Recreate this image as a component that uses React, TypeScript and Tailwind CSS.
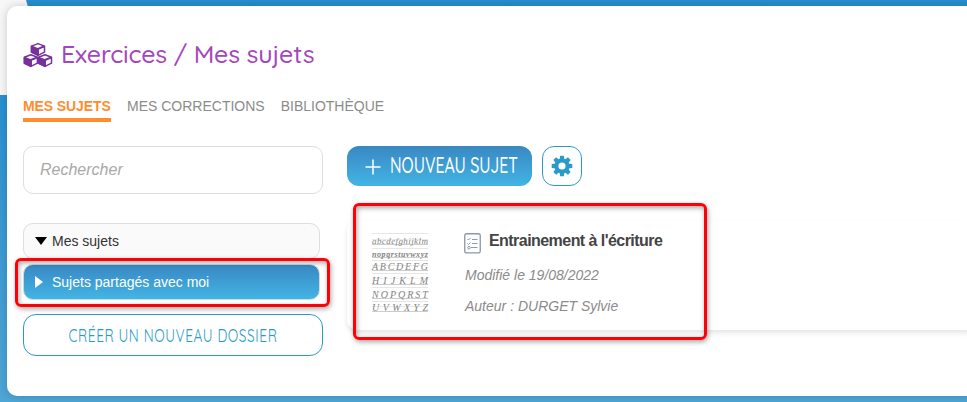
import type { ReactNode } from 'react';

const arial = "font-['Liberation_Sans',Arial,sans-serif]";

function Cubes() {
  return (
    <svg width="30" height="26" viewBox="0 0 30 26" className="shrink-0">
      {[[8, 0.9], [0.9, 12], [15, 12]].map(([x, y], i) => (
        <g key={i} transform={`translate(${x} ${y})`} stroke="#78309a" strokeWidth="1.5" strokeLinejoin="round">
          <path d="M.5 3.2 7 .7l6.5 2.5v6L7 12.4.5 9.2z" fill="#fff" />
          <path d="M.5 3.4 7 6v6.2L.5 9.2z" fill="#78309a" />
          <path d="M7 6l6.5-2.6M7 6v6.2" strokeWidth="2" />
        </g>
      ))}
    </svg>
  );
}

function Gear() {
  return (
    <svg width="22" height="22" viewBox="-11 -11 22 22" fill="#2a9bc9">
      {[0, 45, 90, 135, 180, 225, 270, 315].map((a) => (
        <path key={a} d="M-2.4-6-1.9-10.3H1.9L2.4-6z" transform={`rotate(${a})`} />
      ))}
      <circle r="5.6" fill="none" stroke="#2a9bc9" strokeWidth="4" />
    </svg>
  );
}

function Checklist() {
  return (
    <svg width="17" height="21" viewBox="0 0 17 21" fill="none" className="mt-px shrink-0">
      <rect x=".75" y=".75" width="15.5" height="19.2" rx="1.7" stroke="#8997aa" strokeWidth="1.3" />
      <path d="M3.5 6l1 1 2-2.2M3.5 10.5l1 1 2-2.2M8 6.5h5.5M8 10.5h5.5M7 14.5h6.5" stroke="#8190a5" strokeWidth=".9" />
      <circle cx="5" cy="14.7" r="1.3" stroke="#8190a5" strokeWidth=".9" />
    </svg>
  );
}

const lines: [string, string][] = [
  ['abcdefghijklm', 'h-[15px] text-[9px]'],
  ['nopqrstuvwxyz', 'h-[12px] text-[8px] font-bold'],
  ['ABCDEFG', 'h-[13px] text-[10px]'],
  ['HIJKLM', 'h-[14px] text-[10px]'],
  ['NOPQRST', 'h-[14px] text-[10px]'],
  ['UVWXYZ', 'h-[13px] text-[10px]'],
];

function Worksheet() {
  return (
    <div className="flex w-[56px] flex-col font-['Liberation_Serif',serif] text-[#858585] italic">
      {lines.map(([text, style]) => (
        <div key={text} className={`flex items-center justify-between border-t border-[#e6e6e6] bg-[linear-gradient(#fff_34%,#e8e8e8_35%,#e8e8e8_41%,#fff_42%,#fff_74%,#ccc_75%,#ccc_81%,#fff_82%)] leading-none ${style}`}>
          {text.split('').map((c) => <span key={c}>{c}</span>)}
        </div>
      ))}
    </div>
  );
}

function Tab({ active, children }: { active?: boolean; children: ReactNode }) {
  return (
    <div className={`h-[24px] border-b-4 text-[14px] leading-[17px] whitespace-nowrap ${active ? 'w-[88px] border-[#ff8d2e] font-bold tracking-[-0.1px] text-[#ff8d2e]' : 'border-transparent text-[#8b8b8b]'}`}>
      {children}
    </div>
  );
}

export default function App() {
  return (
    <div className={`relative h-[402px] w-[967px] overflow-hidden bg-linear-to-b from-[#268fd0] from-20% to-[#4da6d6] ${arial}`}>
      <div className="absolute top-0 left-0 h-[95px] w-[30px] bg-[#f7f7f7] [clip-path:polygon(0_0,26px_0,30px_14px,30px_100%,0_100%)]" />
      <main className="relative mt-[6px] ml-[7px] h-[390px] w-[970px] rounded-[10px] bg-white pt-[33px] pl-4 shadow-[0_0_10px_rgba(0,0,0,0.18)]">
        <header className="flex h-[32px] items-center gap-[8px]">
          <Cubes />
          <h1 className="-mt-[2px] font-['Quicksand','Comfortaa','Lato',sans-serif] text-[25px] leading-[30px] font-medium tracking-[-0.18px] whitespace-nowrap text-[#a346bd]">Exercices / Mes sujets</h1>
        </header>
        <nav className="mt-[27px] flex gap-4">
          <Tab active>MES SUJETS</Tab>
          <Tab>MES CORRECTIONS</Tab>
          <Tab>BIBLIOTHÈQUE</Tab>
        </nav>
        <div className="mt-[24px] flex gap-6">
          <aside className="w-[300px] shrink-0">
            <input placeholder="Rechercher" className="block h-12 w-full rounded-[10px] border border-[#dedede] px-4 text-[16px] italic outline-none placeholder:text-[#a9a9a9]" />
            <div className="mt-[29px] flex h-[36px] w-[297px] items-center rounded-[10px] border border-[#dedede] bg-[#fafafa] pl-[11px] text-[14px] text-[#333]">
              <span className="mr-[5px] border-x-[6px] border-t-[8px] border-x-transparent border-t-black" />
              Mes sujets
            </div>
            <div className="mt-[5px] flex h-[36px] w-[297px] items-center rounded-[10px] border border-[#c9dce8] bg-linear-to-b from-[#3988c2] to-[#42b5e5] pl-[11px] text-[14px] text-white">
              <span className="mr-[9px] border-y-[6px] border-l-[8px] border-y-transparent border-l-white" />
              Sujets partagés avec moi
            </div>
            <button className="mt-[14px] flex h-[42px] w-full items-center justify-center rounded-[13px] border border-[#2a9bc9] text-[#2a9bc9]">
              <span className="scale-x-[0.72] font-['Quicksand','Open_Sans',sans-serif] text-[19px] font-normal tracking-[0.78px] whitespace-nowrap">CRÉER UN NOUVEAU DOSSIER</span>
            </button>
          </aside>
          <section className="flex-1">
            <div className="flex gap-[10px]">
              <button className="flex h-10 w-[185px] items-center rounded-[12px] bg-linear-to-b from-[#3988c2] to-[#42b5e5] pl-[18px] text-white">
                <svg width="16" height="16" viewBox="0 0 16 16" stroke="white" strokeWidth="1.5" className="mt-px shrink-0"><path d="M8 .5v15M.5 8h15" /></svg>
                <span className="-mt-0.5 ml-[9px] origin-left scale-x-[0.72] font-['Quicksand','Open_Sans',sans-serif] text-[22px] font-medium whitespace-nowrap">NOUVEAU SUJET</span>
              </button>
              <button className="flex h-10 w-10 items-center justify-center rounded-[12px] border border-[#2a9bc9]"><Gear /></button>
            </div>
            <article className="mt-[34px] flex h-[110px] rounded-[10px] bg-white pl-[25px] shadow-[0_3px_5px_rgba(0,0,0,0.1)]">
              <div className="pt-[13px]"><Worksheet /></div>
              <div className="ml-[36px] whitespace-nowrap">
                <div className="mt-[12px] flex h-[21px] items-start gap-2">
                  <Checklist />
                  <h2 className="text-[16px] leading-[18px] font-bold tracking-[-0.55px] text-[#444]">Entrainement à l'écriture</h2>
                </div>
                <p className="mt-[14px] ml-px text-[14px] leading-[17px] text-[#8b8b8b] italic">Modifié le 19/08/2022</p>
                <p className="mt-[14px] ml-px text-[14px] leading-[17px] text-[#8b8b8b] italic">Auteur : DURGET Sylvie</p>
              </div>
            </article>
          </section>
        </div>
      </main>
      <div className="pointer-events-none absolute top-[258px] left-[15px] h-[49px] w-[315px] rounded-[6px] border-3 border-[#ff0006] shadow-[1px_2px_5px_rgba(0,0,0,0.35),inset_1px_2px_5px_rgba(0,0,0,0.35)]" />
      <div className="pointer-events-none absolute top-[203px] left-[353px] h-[137px] w-[354px] rounded-[6px] border-3 border-[#ff0006] shadow-[1px_2px_5px_rgba(0,0,0,0.35),inset_1px_2px_5px_rgba(0,0,0,0.35)]" />
    </div>
  );
}
